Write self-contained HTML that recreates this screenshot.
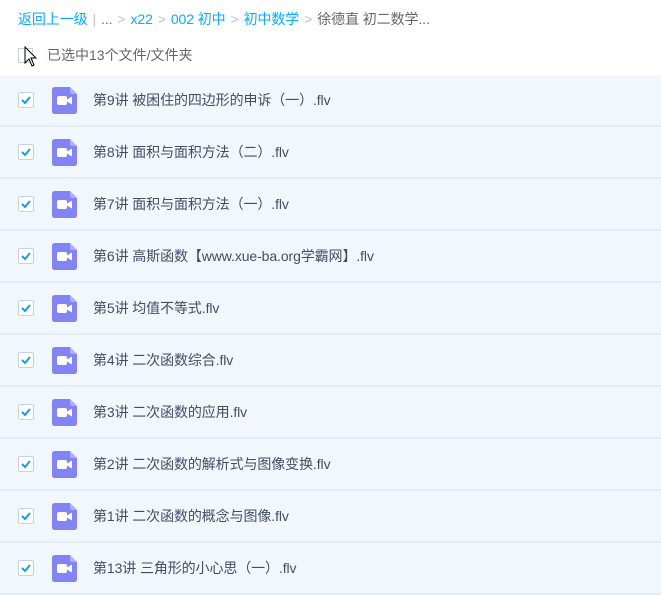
<!DOCTYPE html>
<html><head><meta charset="utf-8"><style>
body{margin:0;width:661px;height:594px;background:#fff;font-family:"Liberation Sans","Noto Sans CJK SC",sans-serif;overflow:hidden;position:relative}
.crumb{position:absolute;left:18px;top:9px;font-size:14px;color:#09aaff;white-space:nowrap;letter-spacing:-0.1px}
.crumb .g{color:#c0c4cc;margin:0 5px}
.crumb .d{color:#666}
.sel{position:absolute;left:18px;top:45px;font-size:14px;color:#666}
.row{position:absolute;left:0;width:661px;height:50px;background:#f2f7fd;border-bottom:2px solid #e2ecf7}
.cb{position:absolute;left:18px;top:17px;width:14px;height:14px;border:1px solid #c8d2dd;border-radius:2px;background:#fff}
.cb svg{position:absolute;left:1px;top:1px}
.ic{position:absolute;left:52px;top:12px}
.t{position:absolute;left:93px;top:15px;font-size:14px;color:#424e67;white-space:nowrap;letter-spacing:-0.1px}
</style></head><body>
<div class="crumb">返回上一级<span class="g">|</span><span class="d">...</span><span class="g">&gt;</span>x22<span class="g">&gt;</span>002 初中<span class="g">&gt;</span>初中数学<span class="g">&gt;</span><span class="d">徐德直 初二数学...</span></div>
<div class="sel"><span style="display:inline-block;width:13px;height:13px;border:1px solid #c8d2dd;vertical-align:-3px;margin-right:14px;background:#fff"></span>已选中13个文件/文件夹</div>
<svg style="position:absolute;left:24px;top:46px" width="14" height="22" viewBox="0 0 14 22"><path d="M1 1 L1 17 L5 13 L8 20 L10 19 L7 12 L12 12 Z" fill="#fff" stroke="#000" stroke-width="1"/></svg>
<div id="rows"></div>
<script>
var n=["第9讲 被困住的四边形的申诉（一）.flv","第8讲 面积与面积方法（二）.flv","第7讲 面积与面积方法（一）.flv","第6讲 高斯函数【www.xue-ba.org学霸网】.flv","第5讲 均值不等式.flv","第4讲 二次函数综合.flv","第3讲 二次函数的应用.flv","第2讲 二次函数的解析式与图像变换.flv","第1讲 二次函数的概念与图像.flv","第13讲 三角形的小心思（一）.flv"];
var h="";
for(var i=0;i<n.length;i++){
h+='<div class="row" style="top:'+(75+i*52)+'px"><div class="cb"><svg width="12" height="12" viewBox="0 0 12 12"><path d="M2 6 L5 9 L10 3" fill="none" stroke="#1a9bf0" stroke-width="2"/></svg></div>'+
'<svg class="ic" width="25" height="27" viewBox="0 0 25 27"><path d="M3 0 H18 L25 7 V24 Q25 27 22 27 H3 Q0 27 0 24 V3 Q0 0 3 0Z" fill="#8384f3"/><path d="M18 0 L25 7 H20 Q18 7 18 5Z" fill="#adaff8"/><rect x="5" y="9" width="10" height="9" rx="2" fill="#fff"/><path d="M15 12.5 L20 9.5 V17.5 L15 14.5Z" fill="#fff"/></svg>'+
'<div class="t">'+n[i]+'</div></div>';}
document.getElementById("rows").innerHTML=h;
</script>
</body></html>
